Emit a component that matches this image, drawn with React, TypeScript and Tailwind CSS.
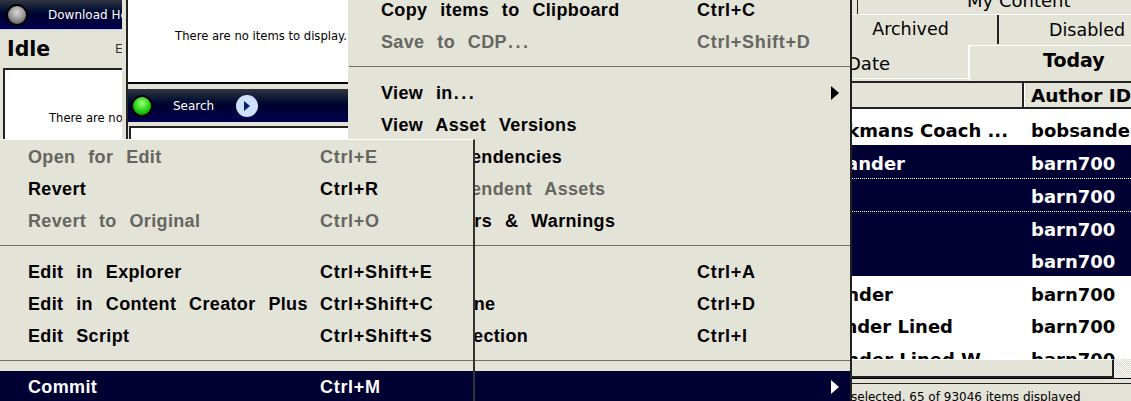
import React from "react";

type Item = { label?: string; keys?: string; off?: boolean; arrow?: boolean; active?: boolean; sep?: boolean; dots?: boolean };

const backItems: Item[] = [
  { label: "Copy items to Clipboard", keys: "Ctrl+C" },
  { label: "Save to CDP", dots: true, keys: "Ctrl+Shift+D", off: true },
  { sep: true },
  { label: "View in", dots: true, arrow: true },
  { label: "View Asset Versions" },
  { label: "View Dependencies" },
  { label: "View Dependent Assets", off: true },
  { label: "View Errors & Warnings" },
  { sep: true },
  { label: "Select All", keys: "Ctrl+A" },
  { label: "Select None", keys: "Ctrl+D" },
  { label: "Invert Selection", keys: "Ctrl+I" },
  { sep: true },
  { label: "Publish", arrow: true, active: true },
];

const frontItems: Item[] = [
  { label: "Open for Edit", keys: "Ctrl+E", off: true },
  { label: "Revert", keys: "Ctrl+R" },
  { label: "Revert to Original", keys: "Ctrl+O", off: true },
  { sep: true },
  { label: "Edit in Explorer", keys: "Ctrl+Shift+E" },
  { label: "Edit in Content Creator Plus", keys: "Ctrl+Shift+C" },
  { label: "Edit Script", keys: "Ctrl+Shift+S" },
  { sep: true },
  { label: "Commit", keys: "Ctrl+M", active: true },
];

const rows = [
  { name: "Bob Rickmans Coach ...", author: "bobsander", on: false, end: "mr-[17px]", dotted: false },
  { name: "Bob Sander", author: "barn700", on: true, end: "mr-[120px]", dotted: false },
  { name: "", author: "barn700", on: true, end: "", dotted: true },
  { name: "", author: "barn700", on: true, end: "", dotted: true },
  { name: "", author: "barn700", on: true, end: "", dotted: false },
  { name: "Bob Sander", author: "barn700", on: false, end: "mr-[132px]", dotted: false },
  { name: "Bob Sander Lined", author: "barn700", on: false, end: "mr-[72px]", dotted: false },
  { name: "Bob Sander Lined W...", author: "barn700", on: false, end: "mr-[25px]", dotted: false },
];

function MenuRow({ item, pad, keysAt }: { item: Item; pad: string; keysAt: string }) {
  if (item.sep) {
    return (
      <div className="h-[19px] shrink-0 pt-[8px]">
        <div className="h-px w-full bg-[#6f6e66]" />
      </div>
    );
  }
  return (
    <div
      className={`flex h-[32px] shrink-0 items-center whitespace-nowrap ${pad} ${
        item.active ? "bg-[#000033] text-white" : item.off ? "text-[#666660]" : "text-black"
      }`}
    >
      <span className={`${keysAt} shrink-0 tracking-[0.35px] [word-spacing:7.5px]`}>
        {item.label}
        {item.dots && <span className="ml-[1px] tracking-[2.5px]">...</span>}
      </span>
      <span className="flex-1 tracking-[0.7px]">{item.keys}</span>
      {item.arrow && (
        <svg width="8" height="14" viewBox="0 0 8 14" className="mr-[11px]">
          <path d="M0 0L8 7L0 14Z" fill={item.active ? "#fff" : "#000"} />
        </svg>
      )}
    </div>
  );
}

function Orb({ color }: { color: "gray" | "green" }) {
  return (
    <div
      className={`h-[22px] w-[22px] shrink-0 rounded-full border-2 border-black ${
        color === "green"
          ? "bg-[radial-gradient(circle_at_50%_35%,#9dff7a,#1fd010_55%,#0a7a08)]"
          : "bg-[radial-gradient(circle_at_50%_35%,#d8d8d8,#8f8f8f_55%,#4a4a4a)]"
      }`}
    />
  );
}

export default function App() {
  return (
    <div className="relative h-[401px] w-[1131px] overflow-hidden bg-[#e4e3d8] font-['Liberation_Sans',Arial,sans-serif]">
      {/* left download panel */}
      <div className="absolute left-0 top-0 flex h-[139px] w-[122px] flex-col overflow-hidden">
        <div className="flex h-[29px] shrink-0 items-center bg-gradient-to-b from-[#33343f] via-[#00002e] to-[#000050] pl-[6px] font-['DejaVu_Sans',sans-serif] text-[12px] text-white">
          <Orb color="gray" />
          <span className="ml-[20px] whitespace-nowrap">Download Health</span>
        </div>
        <div className="flex h-[39px] shrink-0 items-center justify-between border-t border-[#c8d0ea] pl-[7px] font-['DejaVu_Sans',sans-serif]">
          <span className="text-[20.5px] font-bold">Idle</span>
          <span className="w-[7px] overflow-hidden text-[12px] text-[#333]">E</span>
        </div>
        <div className="ml-[3px] flex flex-1 overflow-hidden border-l-2 border-t-2 border-[#222] bg-white pl-[44px] pt-[40px]">
          <span className="whitespace-nowrap font-['DejaVu_Sans',sans-serif] text-[11.6px]">There are no items to display.</span>
        </div>
      </div>

      {/* middle search panel */}
      <div className="absolute left-[126px] top-0 flex h-[139px] w-[222px] flex-col overflow-hidden border-l-2 border-[#222]">
        <div className="flex h-[84px] shrink-0 items-center justify-end border-b-2 border-black bg-white pb-[9px] pr-[1px] font-['DejaVu_Sans',sans-serif] text-[11.6px]">
          There are no items to display.
        </div>
        <div className="h-[5px] shrink-0 bg-[#e4e3d8]" />
        <div className="flex h-[33px] shrink-0 items-center bg-gradient-to-b from-[#33343f] via-[#00002e] to-[#000050] pl-[3px] font-['DejaVu_Sans',sans-serif] text-[12px] text-white">
          <Orb color="green" />
          <span className="ml-[20px]">Search</span>
          <div className="ml-[22px] flex h-[22px] w-[22px] items-center justify-center rounded-full bg-[#cfe0ff]">
            <svg width="8" height="10" viewBox="0 0 8 10">
              <path d="M1 0L7 5L1 10Z" fill="#00206a" />
            </svg>
          </div>
        </div>
        <div className="ml-[1px] mt-[4px] flex-1 border-l-2 border-t-2 border-[#222] bg-white" />
      </div>

      {/* right content panel */}
      <div className="absolute left-[850px] top-0 flex h-[401px] w-[281px] flex-col overflow-hidden font-['DejaVu_Sans',sans-serif]">
        <div className="ml-[7px] h-[14px] shrink-0 overflow-hidden whitespace-nowrap border-l border-[#222] pl-[109px] text-[18px] leading-[14px]">
          <span className="relative top-[-6px]">My Content</span>
        </div>
        <div className="flex h-[30px] shrink-0 border-t border-white text-[17.5px]">
          <div className="flex w-[149px] items-center justify-center border-r-2 border-[#222] pr-[26px]">Archived</div>
          <div className="flex-1 pl-[50px] leading-[30px]">Disabled</div>
        </div>
        <div className="flex h-[37px] shrink-0 pt-[1px] text-[18px]">
          <div className="flex h-[34px] w-[119px] items-center overflow-hidden border-b border-r border-white pt-[3px]">
            <span className="ml-[-3px]">Date</span>
          </div>
          <div className="flex-1 border-l border-t border-white pl-[73px] text-[19px] font-bold">Today</div>
        </div>
        <div className="flex h-[28px] shrink-0 border-y-2 border-[#222] text-[18.5px] font-bold">
          <div className="w-[174px] border-r-2 border-[#222]" />
          <div className="flex-1 whitespace-nowrap border-l border-white pl-[6px] leading-[25px]">Author ID</div>
        </div>
        <div className="h-[250px] shrink-0 overflow-hidden bg-white pt-[3.5px] text-[18px] font-bold">
          {rows.map((r, i) => (
            <div
              key={i}
              className={`flex h-[32.75px] items-center whitespace-nowrap pt-[3px] ${r.on ? "bg-[#000033] text-white" : "text-black"} ${
                r.dotted ? "border-t border-dotted border-white" : ""
              }`}
            >
              <div className="flex w-[175px] shrink-0 justify-end overflow-hidden">
                <span className={r.end}>{r.name}</span>
              </div>
              <span className="ml-[6px]">{r.author}</span>
            </div>
          ))}
        </div>
        <div className="flex h-[20px] shrink-0 border-b border-black">
          <div className="w-[264px] border-b-2 border-r-2 border-t border-[#222] border-t-white" />
          <div className="flex-1 bg-[repeating-conic-gradient(#fff_0_25%,#d8d7cc_0_50%)] bg-[length:2px_2px]" />
        </div>
        <div className="mt-[4px] flex-1 overflow-hidden whitespace-nowrap border-t border-[#222] text-[12px] leading-[26px]">
          <span className="ml-[1px]">selected. 65 of 93046 items displayed</span>
        </div>
      </div>

      {/* back context menu */}
      <div className="absolute left-[349px] top-[-6px] flex h-[407px] w-[503px] flex-col overflow-hidden border-r-2 border-[#222] bg-[#e4e3d8] text-[18px] font-bold">
        {backItems.map((it, i) => (
          <MenuRow key={i} item={it} pad="pl-[32px]" keysAt="w-[316px]" />
        ))}
      </div>

      {/* front context menu */}
      <div className="absolute left-0 top-[139px] flex h-[262px] w-[475px] flex-col overflow-hidden border-r-2 border-t border-[#333] border-t-white bg-[#e4e3d8] pt-[1px] text-[18px] font-bold">
        {frontItems.map((it, i) => (
          <MenuRow key={i} item={it} pad="pl-[28px]" keysAt="w-[292px]" />
        ))}
      </div>
    </div>
  );
}
